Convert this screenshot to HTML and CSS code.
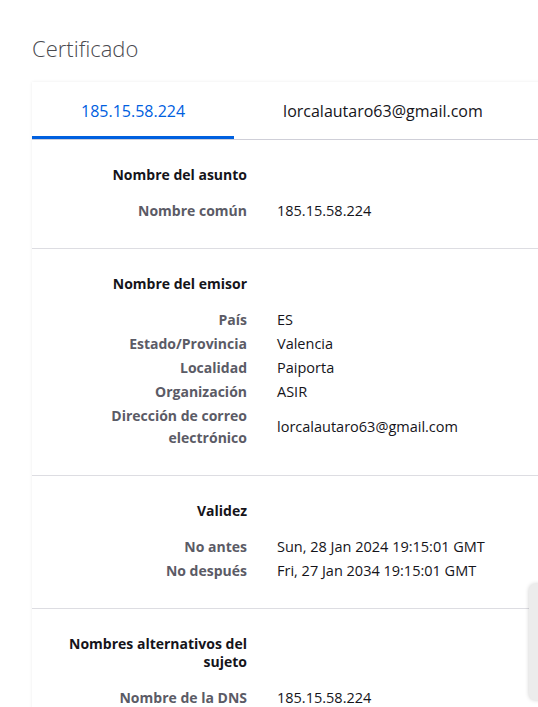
FILE: index.html
```html
<!DOCTYPE html>
<html lang="es">
<head>
<meta charset="utf-8">
<title>Certificado</title>
<link rel="stylesheet" href="styles.css">
</head>
<body>
<main class="page">
  <h1 class="title">Certificado</h1>
  <section class="card">
    <nav class="tabs">
      <div class="tab selected">185.15.58.224</div>
      <div class="tab">lorcalautaro63@gmail.com</div>
    </nav>

    <div class="group">
      <h2 class="group-title">Nombre del asunto</h2>
      <div class="row"><span class="label">Nombre común</span><span class="value">185.15.58.224</span></div>
    </div>

    <div class="group">
      <h2 class="group-title">Nombre del emisor</h2>
      <div class="row"><span class="label">País</span><span class="value">ES</span></div>
      <div class="row"><span class="label">Estado/Provincia</span><span class="value">Valencia</span></div>
      <div class="row"><span class="label">Localidad</span><span class="value">Paiporta</span></div>
      <div class="row"><span class="label">Organización</span><span class="value">ASIR</span></div>
      <div class="row"><span class="label">Dirección de correo electrónico</span><span class="value">lorcalautaro63@gmail.com</span></div>
    </div>

    <div class="group">
      <h2 class="group-title">Validez</h2>
      <div class="row"><span class="label">No antes</span><span class="value">Sun, 28 Jan 2024 19:15:01 GMT</span></div>
      <div class="row"><span class="label">No después</span><span class="value">Fri, 27 Jan 2034 19:15:01 GMT</span></div>
    </div>

    <div class="group">
      <h2 class="group-title">Nombres alternativos del sujeto</h2>
      <div class="row"><span class="label">Nombre de la DNS</span><span class="value">185.15.58.224</span></div>
    </div>
  </section>
</main>
<div class="side-panel"></div>
</body>
</html>
```

FILE: styles.css
```css
html, body {
  margin: 0;
  padding: 0;
  overflow: hidden;
  background: #ffffff;
}

body {
  font-family: "Open Sans", "Noto Sans", sans-serif;
  color: #15141a;
}

.page {
  padding: 0 0 0 32px;
}

.title {
  margin: 0 0 19px;
  padding-top: 33px;
  font-size: 22px;
  line-height: 30px;
  font-weight: 300;
  color: #4a4a4f;
}

.card {
  width: 560px;
  background: #ffffff;
  box-shadow: 0 0 3px rgba(0, 0, 0, 0.08);
}

.tabs {
  display: flex;
  border-bottom: 1px solid #cfcfd8;
}

.tab {
  padding: 0 49px;
  height: 54px;
  line-height: 58px;
  font-size: 16px;
  color: #15141a;
  border-bottom: 3px solid transparent;
}

.tab.selected {
  color: #0060df;
  border-bottom-color: #0060df;
}

.group {
  padding: 26px 0 26px;
  border-bottom: 1px solid #dddde2;
  display: flex;
  flex-direction: column;
  gap: 2px;
}

.group-title {
  margin: 0 0 14px;
  width: 215px;
  box-sizing: border-box;
  padding-left: 30px;
  text-align: right;
  font-size: 14px;
  line-height: 18px;
  font-weight: 700;
  color: #15141a;
}

.row {
  display: grid;
  grid-template-columns: 215px 1fr;
  column-gap: 30px;
  align-items: center;
  line-height: 22px;
}

.label {
  box-sizing: border-box;
  padding-left: 50px;
  text-align: right;
  font-size: 14px;
  font-weight: 700;
  color: #5b5b66;
}

.value {
  font-size: 14.5px;
  color: #15141a;
}

.side-panel {
  position: fixed;
  left: 529px;
  top: 584px;
  width: 20px;
  height: 116px;
  background: #ececec;
  border-radius: 6px;
  box-shadow: 0 0 4px rgba(0, 0, 0, 0.2);
}
```
